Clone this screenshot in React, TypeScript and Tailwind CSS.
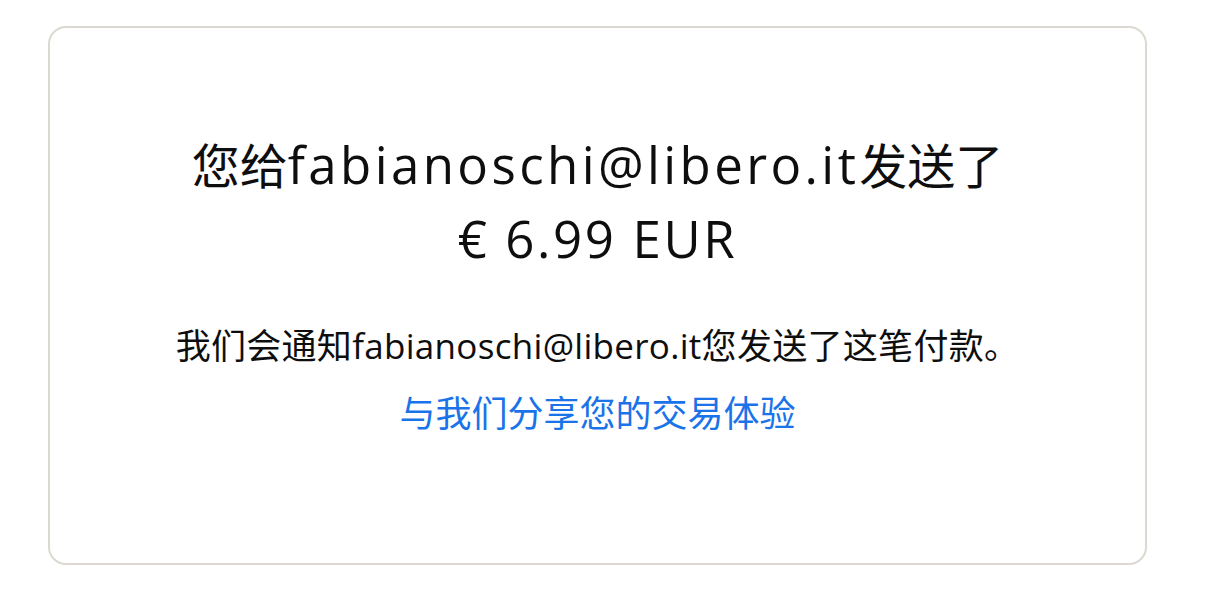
const font = {
  fontFamily: '"Open Sans", "Noto Sans CJK SC", sans-serif',
};

export default function App() {
  return (
    <div className="min-h-[600px] w-[1226px] bg-white pl-[48px] pt-[26px]" style={font}>
      <div className="flex h-[539px] w-[1099px] flex-col items-center rounded-[18px] border-2 border-[#dcd9d2] bg-white pt-[100px] text-[#0e0e0e]">
        <h1 className="text-center text-[48px] leading-[72px] font-normal">
          您给<span className="text-[51px] tracking-[3.4px]">fabianoschi@libero.it</span>发送了
          <br />
          <span className="text-[51px] tracking-[2.6px]">€ 6.99 EUR</span>
        </h1>
        <p className="mt-[44px] text-[35px] leading-[52px] tracking-[0.3px]">
          我们会通知fabianoschi@libero.it您发送了这笔付款。
        </p>
        <a href="#" className="mt-[16px] text-[36px] leading-[52px] text-[#1a73e8]">
          与我们分享您的交易体验
        </a>
      </div>
    </div>
  );
}
